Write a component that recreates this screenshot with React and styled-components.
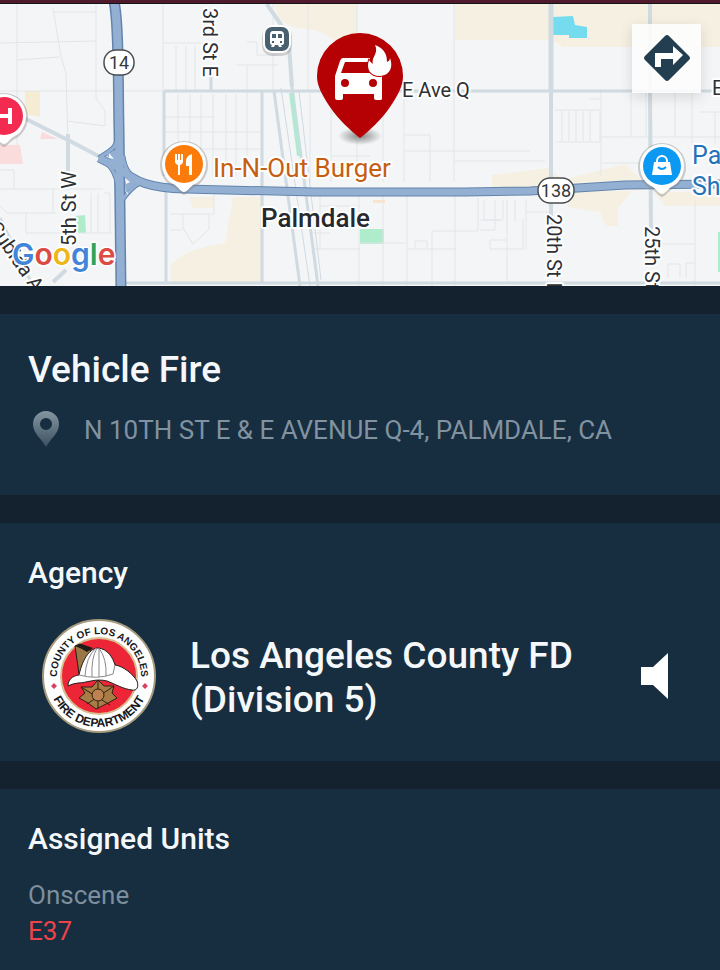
import React from "react";
import styled, { createGlobalStyle } from "styled-components";

const GlobalStyle = createGlobalStyle`
  *, *::before, *::after { box-sizing: border-box; }
  html { background: #172d40; }
  body { margin: 0; font-family: Roboto, "Liberation Sans", sans-serif; color: #f4f8fa; }
  h1, h2, p, ul { margin: 0; padding: 0; }
`;

const Screen = styled.main`
  display: flex;
  flex-direction: column;
  min-height: 100vh;
  background: #13222e;
  border-top: 3px solid #4f1a2b;
`;

const MapPanel = styled.section`
  position: relative;
  border-top: 1px solid #14131a;
`;

const MapCanvas = styled.svg`
  display: block;
  width: 100%;
  height: 282px;
  background: #f4f5f6;
`;

const DirectionsButton = styled.button`
  position: absolute;
  top: 20px;
  right: 19px;
  display: grid;
  place-items: center;
  width: 69px;
  height: 69px;
  padding: 0 0 2px;
  border: 0;
  background: rgba(253, 253, 253, 0.88);
  box-shadow: 0 4px 12px rgba(60, 60, 60, 0.16);
  cursor: pointer;
`;

const Sections = styled.div`
  display: flex;
  flex: 1;
  flex-direction: column;
  gap: 28px;
  padding-top: 28px;
`;

const Card = styled.section`
  flex: ${({ $fill }) => ($fill ? "1 0 auto" : "0 0 auto")};
  padding: ${({ $pad }) => $pad};
  background: #172d40;
`;

const IncidentTitle = styled.h1`
  font-size: 37px;
  line-height: 44px;
  font-weight: 500;
`;

const AddressRow = styled.div`
  display: flex;
  align-items: center;
  gap: 24px;
  margin-top: 19px;
`;

const Address = styled.p`
  font-size: 26px;
  line-height: 36px;
  color: #8192a0;
`;

const SectionTitle = styled.h2`
  font-size: 30px;
  line-height: 36px;
  font-weight: 500;
`;

const AgencyRow = styled.div`
  display: flex;
  align-items: center;
  margin-top: 27px;
  padding: 0 22px 0 13px;
`;

const AgencyName = styled.p`
  flex: 1;
  margin-left: 33px;
  padding-top: 4px;
  font-size: 37px;
  line-height: 44px;
  font-weight: 500;
`;

const SpeakerButton = styled.button`
  display: block;
  padding: 2px 0 0;
  border: 0;
  background: none;
  cursor: pointer;
`;

const Status = styled.p`
  margin-top: 20px;
  font-size: 26px;
  line-height: 36px;
  color: #7d8e9d;
`;

const UnitList = styled.ul`
  list-style: none;
  font-size: 26px;
  line-height: 36px;
  color: #ee4349;
`;

const StreetLabel = styled.text`
  font-family: Roboto, sans-serif;
  font-size: ${({ $size }) => $size || 20}px;
  font-weight: ${({ $weight }) => $weight || 400};
  fill: ${({ $color }) => $color || "#2d3034"};
  stroke: #fff;
  stroke-width: 4px;
  stroke-linejoin: round;
  paint-order: stroke;
`;

const ShieldLabel = styled.text`
  font-family: Roboto, sans-serif;
  font-size: 18px;
  text-anchor: middle;
  fill: #35383b;
`;

const Wordmark = styled.text`
  font-family: Inter, sans-serif;
  font-size: 30px;
  font-weight: 600;
  stroke: #fff;
  stroke-width: 3px;
  stroke-linejoin: round;
  paint-order: stroke;
`;

const SealText = styled.text`
  font-family: "Liberation Sans", Arial, sans-serif;
  font-size: ${({ $size }) => $size}px;
  font-weight: 700;
  text-anchor: middle;
  fill: #17171a;
`;

function PlacePin({ x, y, color, children }) {
  return (
    <g transform={`translate(${x} ${y})`}>
      <path d="M0 31C-2 31-5 27-9 24C-18 20-24 11-24 1A24 24 0 0 1 24 1C24 11 18 20 9 24C5 27 2 31 0 31Z" fill="#777" opacity=".35" />
      <path d="M0 28C-3 28-5 24-9 21C-17 18-22 9-22 0A22 22 0 0 1 22 0C22 9 17 18 9 21C5 24 3 28 0 28Z" fill="#fff" />
      <circle r="19" fill={color} />
      {children}
    </g>
  );
}

function RouteShield({ x, y, width, label }) {
  return (
    <g transform={`translate(${x} ${y})`}>
      <rect x={-width / 2} y="-12" width={width} height="25" rx="12" fill="#fff" stroke="#4a4e52" strokeWidth="1.5" />
      <ShieldLabel y="7">{label}</ShieldLabel>
    </g>
  );
}

function IncidentMap() {
  return (
    <MapCanvas viewBox="0 4 720 282" preserveAspectRatio="xMidYMid slice" role="img" aria-label="Map of Palmdale">
      <rect y="4" width="720" height="282" fill="#f4f5f6" />
      <g fill="#f6f0e3">
        <path d="M274 4H358V43H337Q324 30 307 29Q286 28 278 16Z" />
        <path d="M455 4H720V47H563L552 40H455Z" />
        <path d="M233 197H264V282H171V265Q182 250 225 243Z" />
        <path d="M189 197H214V208H193Z" />
        <path d="M492 175L548 168 563 180 625 164 642 180V190H492Z" />
        <path d="M568 191H632L618 208V226H606L600 212 568 207Z" />
        <path d="M654 192H720V206H665Z" />
      </g>
      <path d="M25 91H40V117L25 114Z" fill="#f6ecd3" />
      <path d="M0 145H20L23 164H0Z" fill="#fbdcdc" />
      <path d="M42 132L58 139H40Z" fill="#fbdcdc" />
      <path d="M373 200H385V203H373Z" fill="#fbe4cc" />
      <g fill="#aeeccb">
        <path d="M75 216L85 215 86 233H78Z" />
        <path d="M360 229H384V244H360Z" />
        <path d="M718 232H720V272H718Z" />
      </g>
      <path d="M553 17L573 16 575 25 587 27V38H569V35H553Z" fill="#75dcf0" />

      <g fill="none" stroke="#e2e6e9" strokeWidth="1">
        <path d="M17 4V145M0 43L96 41M96 4V98L105 111V126L67 121M53 8L61 57 66 73 68 145M53 12H96M17 60L59 57M0 91H163M0 189H103M0 206L7 213H56M26 213V233H112M14 189V170H0M53 189V212M91 193V233M98 193V233M104 193H110V233M123 145V91" />
        <path d="M163 4V91M163 43H207M176 46V90M186 46V90M195 46V90M178 94V176M190 94V176M201 94V176M213 94V176M226 94V176M236 94V176M247 65V176M163 132H260M163 149H260M163 117H215M237 65H278M247 42H257V55H278" />
        <path d="M170 214H214V191M183 215V228L193 244 209 229V214M170 230H182" />
        <path d="M273 4V91M308 4V91M310 91V182M331 91V182M357 4V37M331 112H358M357 140V183M383 92V182M404 92V182M405 135H430M430 135V182M454 4V181M405 151H530M455 161H545M332 156H370M320 197V250M320 206H357M359 197V286M383 197V286M360 243H407M407 197V286M407 249H456M455 197V286M432 249V286M432 249V231H478V198M415 248V241H427V248M313 249H360M313 233H330" />
        <path d="M484 200V220H503V200M480 220H500M507 200V282M495 200V230H480M515 200V222M523 219V249H490V240H506M526 200V249M526 212H550" />
        <path d="M555 110H600V142M562 111V142M569 111V142M576 111V142M583 111V142M590 111V142M556 142H600M601 89V176M589 99H600M631 93V137M601 137H720M646 93V137M675 93V137M692 93V145M700 112H720M715 112V145M601 163H641M695 200V286M657 244H695M668 278V264H680V278M686 278V263H695" />
      </g>
      <g fill="none" stroke="#d0dae1">
        <path d="M164 91V176M166 191V282M211 77V91M164 91H720M262 91V282M274 91L300 286M291 80L318 286" strokeWidth="3" />
        <path d="M267 4C275 18 286 27 289 46L292 87M650 4V91M650 91L651 235" strokeWidth="4" />
        <path d="M551 4V91" strokeWidth="5" />
        <path d="M551 91V240" strokeWidth="4" />
        <path d="M24 118L70 141 104 159M68 134V184M53 282L66 270" strokeWidth="4" />
        <path d="M122 283H720M0 218L33 286" strokeWidth="3" />
        <path d="M281 88L310 286M299 91L321 280" strokeWidth="1" />
      </g>
      <path d="M289 93H294L301 156H297Z" fill="#b4e8d4" />
      <g fill="none" stroke="#6384ac" strokeLinejoin="round">
        <path d="M114 1C119 24 118 80 119 130L121 290" strokeWidth="11" />
        <path d="M99 158L119 168C135 182 150 188 185 189L315 192 465 192 530 191 625 185 720 184" strokeWidth="9" />
        <path d="M118 134C117 150 108 151 99 158M100 160Q115 165 118 188M123 156Q125 174 140 183Q132 187 123 199" strokeWidth="5" />
      </g>
      <g fill="none" stroke="#93b0d3" strokeLinejoin="round">
        <path d="M114 1C119 24 118 80 119 130L121 290" strokeWidth="8" />
        <path d="M99 158L119 168C135 182 150 188 185 189L315 192 465 192 530 191 625 185 720 184" strokeWidth="7" />
        <path d="M118 134C117 150 108 151 99 158M100 160Q115 165 118 188M123 156Q125 174 140 183Q132 187 123 199" strokeWidth="3" />
        <path d="M107 155L116 150V165ZM125 170L137 182 126 192Z" fill="#93b0d3" strokeWidth="1" />
      </g>
      <path d="M109 153L114 159 109 158ZM125 178L130 182 126 184ZM126 191L128 193 127 195Z" fill="#f4f5f6" />

      <RouteShield x={119} y={62} width={30} label="14" />
      <RouteShield x={556} y={190} width={36} label="138" />

      <StreetLabel transform="translate(203 8) rotate(90)">3rd St E</StreetLabel>
      <StreetLabel transform="translate(76 246) rotate(-90)">5th St W</StreetLabel>
      <StreetLabel transform="translate(547 214) rotate(90)">20th St E</StreetLabel>
      <StreetLabel transform="translate(645 226) rotate(90)">25th St E</StreetLabel>
      <StreetLabel transform="translate(-12 228) rotate(55)">Subida Ave</StreetLabel>
      <StreetLabel x="402" y="97">E Ave Q</StreetLabel>
      <StreetLabel x="712" y="95">E Ave Q</StreetLabel>
      <StreetLabel x="261" y="227" $size={26} $weight={500} $color="#27292d">Palmdale</StreetLabel>
      <StreetLabel x="213" y="177" $size={26} $color="#c65e12">In-N-Out Burger</StreetLabel>
      <StreetLabel x="692" y="164" $size={25} $color="#2672b8">Palmdale</StreetLabel>
      <StreetLabel x="692" y="195" $size={25} $color="#2672b8">Shopping</StreetLabel>

      <g transform="translate(277 40)">
        <rect x="-15" y="-14" width="30" height="30" rx="10" fill="#777" opacity=".3" />
        <rect x="-14" y="-15" width="28" height="28" rx="9" fill="#fff" />
        <rect x="-12" y="-13" width="24" height="24" rx="7" fill="#49616f" />
        <path d="M-4-9H3Q7-9 7-5V3Q7 5 4 5L5 7H2L1 5H-2L-3 7H-6L-5 5Q-7 5-7 2V-5Q-7-9-4-9Z" fill="#fff" />
        <path d="M-5-6H-1V-2H-5ZM1-6H5V-2H1ZM-5 1H-3V3H-5ZM3 1H5V3H3Z" fill="#49616f" />
      </g>

      <PlacePin x={4} y={116} color="#f32b50">
        <path d="M-6-8V8M6-8V8M-6 0H6" fill="none" stroke="#fff" strokeWidth="4" />
      </PlacePin>
      <PlacePin x={184} y={164} color="#fb7b0b">
        <path d="M-9-10H-7V-4H-6V-10H-4V-4H-3V-10H-1V-3Q-1 0-4 1V11H-6V1Q-9 0-9-3Z" fill="#fff" />
        <path d="M8-10V11H5V2H2V-3Q2-8 8-10Z" fill="#fff" />
      </PlacePin>
      <PlacePin x={662} y={166} color="#0c99f2">
        <path d="M-8-4H8L10 9H-10Z" fill="#fff" />
        <path d="M-5-3V-5A5 5 0 0 1 5-5V-3" fill="none" stroke="#fff" strokeWidth="2" />
        <path d="M-4 1Q0 5 4 1" fill="none" stroke="#0c99f2" strokeWidth="2" />
      </PlacePin>

      <defs>
        <radialGradient id="pinShadow">
          <stop offset="0" stopColor="#555" stopOpacity=".7" />
          <stop offset="1" stopColor="#555" stopOpacity="0" />
        </radialGradient>
      </defs>
      <ellipse cx="360" cy="136" rx="22" ry="9" fill="url(#pinShadow)" />
      <path d="M360 138C351 131 338 119 330 107C322 95 317 86 317 76A43 43 0 0 1 403 76C403 86 398 95 390 107C382 119 369 131 360 138Z" fill="#b50004" />
      <path fillRule="evenodd" fill="#fff" d="M343 58H370V62H345L341 73H370L382 76V99Q382 100 380 100H376Q374 100 374 98V94H343V98Q343 100 341 100H337Q335 100 335 98V76L340 61Q341 58 343 58ZM345 79A4 4 0 1 0 345 87A4 4 0 1 0 345 79ZM373 79A4 4 0 1 0 373 87A4 4 0 1 0 373 79Z" />
      <path d="M375 45C385 49 387 55 387 62C389 61 390 60 390 58C393 66 391 75 380 76C370 76 366 69 369 60C370 61 371 63 373 64C371 57 379 54 375 45Z" fill="#fff" stroke="#b50004" strokeWidth="2" paintOrder="stroke" />
      <Wordmark x="12" y="265">
        <tspan fill="#4285d8">G</tspan><tspan fill="#dc4b43">o</tspan><tspan fill="#eeb719">o</tspan><tspan fill="#4285d8">g</tspan><tspan fill="#31a35b">l</tspan><tspan fill="#dc4b43">e</tspan>
      </Wordmark>
    </MapCanvas>
  );
}

function DirectionsIcon() {
  return (
    <svg width="48" height="48" viewBox="0 0 48 48" aria-hidden="true">
      <path d="M22 2Q24 0 26 2L46 22Q48 24 46 26L26 46Q24 48 22 46L2 26Q0 24 2 22Z" fill="#233e50" />
      <path d="M12 33V19H30V12L40 21 30 31V25H18V33Z" fill="#fff" />
    </svg>
  );
}

function LocationIcon() {
  return (
    <svg width="32" height="38" viewBox="0 0 32 38" aria-hidden="true">
      <defs>
        <linearGradient id="locationFill" x2="0" y2="1">
          <stop stopColor="#8496a1" />
          <stop offset="1" stopColor="#3c5060" />
        </linearGradient>
      </defs>
      <path fillRule="evenodd" d="M18 0A13 13 0 0 0 5 13C5 23 14 28 18 36C22 28 31 23 31 13A13 13 0 0 0 18 0ZM18 7A6 6 0 1 1 18 19A6 6 0 1 1 18 7Z" fill="url(#locationFill)" />
    </svg>
  );
}

function AgencySeal() {
  return (
    <svg width="116" height="116" viewBox="-58 -58 116 116" role="img" aria-label="County of Los Angeles Fire Department seal">
      <defs>
        <path id="sealTop" d="M-40 13A42 42 0 1 1 40 13" />
        <path id="sealBottom" d="M-51 0A51 51 0 0 0 51 0" />
      </defs>
      <circle r="56" fill="#fff" stroke="#a69b7d" strokeWidth="2" />
      <circle r="38" fill="#ed2637" stroke="#d8bd91" strokeWidth="2" />
      <SealText $size={10}><textPath href="#sealTop" startOffset="50%">COUNTY OF LOS ANGELES</textPath></SealText>
      <SealText $size={12}><textPath href="#sealBottom" startOffset="50%">FIRE DEPARTMENT</textPath></SealText>
      <path d="M-45 7L-42 10-45 13-48 10ZM46 7L49 10 46 13 43 10Z" fill="#d74262" />
      <path d="M-24-30L-19-32-8-28-12-2-20-2Z" fill="#9b7745" stroke="#211b17" />
      <path d="M-24-30L-19-32-6-28-12-24-17-27Z" fill="#211b17" />
      <path d="M-31 10C-31 4-27 0-20-1C-16-19-8-28-1-28C9-27 14-18 16-11C24-10 34-2 38 5C40 11 38 15 33 14C24 13 16 8 8 5C-4 2-12 7-21 7Q-28 8-31 10Z" fill="#fff" stroke="#232022" />
      <path d="M-20-1Q-2 4 14-2L16-11M-14 0Q-13-19-3-28M-7 1Q-8-18-2-28M0 1V-27M7 0Q8-17 0-28" fill="none" stroke="#8b8787" strokeWidth="1" />
      <path d="M-1 4L5 10 15 10 13 17 18 22 9 27-3 33-11 27-20 22-14 17-18 11-7 11Z" fill="#a77d45" stroke="#302116" strokeWidth="1" />
      <path d="M-18 11L11 29M-12 28L15 10M-1 4V33" stroke="#302116" strokeWidth="1" />
      <circle cx="-1" cy="19" r="6" fill="#bf8150" stroke="#302116" />
    </svg>
  );
}

export default function App() {
  return (
    <>
      <GlobalStyle />
      <Screen>
        <MapPanel>
          <IncidentMap />
          <DirectionsButton type="button" aria-label="Directions"><DirectionsIcon /></DirectionsButton>
        </MapPanel>
        <Sections>
          <Card $pad="34px 28px 46px">
            <IncidentTitle>Vehicle Fire</IncidentTitle>
            <AddressRow>
              <LocationIcon />
              <Address>N 10TH ST E &amp; E AVENUE Q-4, PALMDALE, CA</Address>
            </AddressRow>
          </Card>
          <Card $pad="32px 28px 27px">
            <SectionTitle>Agency</SectionTitle>
            <AgencyRow>
              <AgencySeal />
              <AgencyName>Los Angeles County FD (Division 5)</AgencyName>
              <SpeakerButton type="button" aria-label="Listen to agency audio">
                <svg width="30" height="48" viewBox="0 0 30 48" aria-hidden="true">
                  <path d="M1 15H13L28 1V47L13 33H1Z" fill="#fff" />
                </svg>
              </SpeakerButton>
            </AgencyRow>
          </Card>
          <Card $pad="32px 28px 20px" $fill>
            <SectionTitle>Assigned Units</SectionTitle>
            <Status>Onscene</Status>
            <UnitList><li>E37</li></UnitList>
          </Card>
        </Sections>
      </Screen>
    </>
  );
}
